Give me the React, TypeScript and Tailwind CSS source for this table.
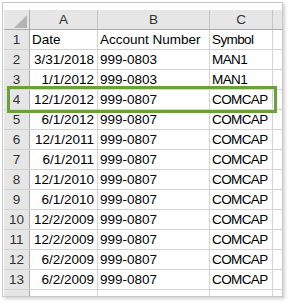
const rows = [
  { date: "Date", acct: "Account Number", sym: "Symbol", header: true },
  { date: "3/31/2018", acct: "999-0803", sym: "MAN1" },
  { date: "1/1/2012", acct: "999-0803", sym: "MAN1" },
  { date: "12/1/2012", acct: "999-0807", sym: "COMCAP" },
  { date: "6/1/2012", acct: "999-0807", sym: "COMCAP" },
  { date: "12/1/2011", acct: "999-0807", sym: "COMCAP" },
  { date: "6/1/2011", acct: "999-0807", sym: "COMCAP" },
  { date: "12/1/2010", acct: "999-0807", sym: "COMCAP" },
  { date: "6/1/2010", acct: "999-0807", sym: "COMCAP" },
  { date: "12/2/2009", acct: "999-0807", sym: "COMCAP" },
  { date: "12/2/2009", acct: "999-0807", sym: "COMCAP" },
  { date: "6/2/2009", acct: "999-0807", sym: "COMCAP" },
  { date: "6/2/2009", acct: "999-0807", sym: "COMCAP" },
];

const cols = "grid grid-cols-[26px_68px_112px_63px_7px]";

export default function App() {
  return (
    <div className="w-[290px] h-[308px] bg-white pt-[2px] pl-[2px] font-['Liberation_Sans',Arial,sans-serif] text-[13.5px] leading-none">
      <div className="relative w-[281px] h-[295px] border border-[#c8c8c8] shadow-[2px_2px_3px_rgba(0,0,0,0.18)] pt-[7px] pl-[1px] overflow-hidden">
        {/* column headers */}
        <div className={`${cols} h-[20px] bg-[#e6e6e6] border-b border-[#ababab] text-[#333]`}>
          <div className="relative border-r border-[#ababab]">
            <svg className="absolute left-[10px] top-[5px]" width="13" height="13" viewBox="0 0 13 13">
              <polygon points="13,0 13,13 0,13" fill="#b4b4b4" />
            </svg>
          </div>
          <div className="flex items-center justify-center border-r border-[#c6c6c6]">A</div>
          <div className="flex items-center justify-center border-r border-[#c6c6c6]">B</div>
          <div className="flex items-center justify-center border-r border-[#c6c6c6]">C</div>
          <div />
        </div>

        {rows.map((r, i) => (
          <div key={i} className={`${cols} h-[20px] border-b border-[#d4d4d4]`}>
            <div className="flex items-center justify-center bg-[#e6e6e6] border-r border-[#ababab] text-[#333]">
              {i + 1}
            </div>
            <div
              className={`flex items-center border-r border-[#d4d4d4] text-black ${
                r.header ? "justify-start pl-[2px]" : "justify-end pr-[3px]"
              }`}
            >
              {r.date}
            </div>
            <div className="flex items-center pl-[2px] border-r border-[#d4d4d4] text-black whitespace-nowrap">
              {r.acct}
            </div>
            <div className="flex items-center pl-[2px] border-r border-[#d4d4d4] text-black tracking-[-0.6px]">
              {r.sym}
            </div>
            <div />
          </div>
        ))}

        {/* partial row at bottom */}
        <div className={`${cols} h-[20px]`}>
          <div className="bg-[#e6e6e6] border-r border-[#ababab]" />
          <div className="border-r border-[#d4d4d4]" />
          <div className="border-r border-[#d4d4d4]" />
          <div className="border-r border-[#d4d4d4]" />
          <div />
        </div>

        {/* selected row highlight */}
        <div className="absolute left-[4px] top-[83px] w-[270px] h-[27px] border-[3px] border-[#6aa239]" />
      </div>
    </div>
  );
}
